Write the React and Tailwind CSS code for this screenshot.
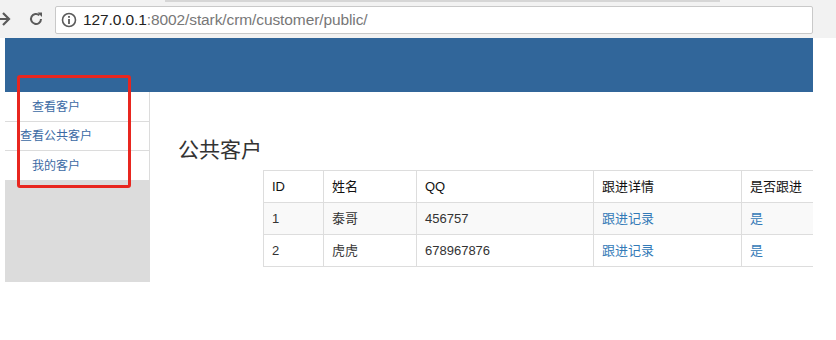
import React from 'react'

const rows = [
  { id: 1, name: '泰哥', qq: '456757' },
  { id: 2, name: '虎虎', qq: '678967876' },
]

const menu = ['查看客户', '查看公共客户', '我的客户']

function Toolbar() {
  return (
    <div className="relative h-[38px] bg-[#f2f2f2] flex items-center">
      <div className="absolute top-0 left-[165px] w-[555px] h-[2px] bg-[#d6d6d6]" />
      {/* forward arrow, cut at the left edge */}
      <svg className="absolute left-[-6px] top-[11px]" width="18" height="16" viewBox="0 0 18 16">
        <path d="M2 8h13M9 2l6 6-6 6" fill="none" stroke="#5a5a5a" strokeWidth="2.2" />
      </svg>
      {/* reload */}
      <svg className="absolute left-[28px] top-[11px]" width="16" height="16" viewBox="0 0 16 16">
        <path d="M13 8a5 5 0 1 1-1.6-3.7" fill="none" stroke="#5a5a5a" strokeWidth="2" />
        <path d="M9.5 1.5h4.5v4.5z" fill="#5a5a5a" />
      </svg>
      <div className="absolute left-[55px] top-[6px] w-[758px] h-[28px] bg-white border border-[#c9c9c9] rounded-[2px] flex items-center">
        <svg className="ml-[5px]" width="16" height="16" viewBox="0 0 16 16">
          <circle cx="8" cy="8" r="6.5" fill="none" stroke="#5a5a5a" strokeWidth="1.6" />
          <rect x="7.1" y="7" width="1.8" height="5" fill="#5a5a5a" />
          <rect x="7.1" y="4" width="1.8" height="1.8" fill="#5a5a5a" />
        </svg>
        <span className="ml-[6px] text-[15.5px] font-['Liberation_Sans',sans-serif] tracking-[-0.1px]">
          <span className="text-[#222]">127.0.0.1</span>
          <span className="text-[#777]">:8002/stark/crm/customer/public/</span>
        </span>
      </div>
    </div>
  )
}

function Sidebar() {
  return (
    <div className="w-[145px] shrink-0 flex flex-col">
      {menu.map((m, i) => (
        <div
          key={m}
          className={`bg-white border-r border-b border-[#dcdcdc] flex items-center ${i === 1 ? 'h-[29px]' : 'h-[30px]'}`}
        >
          <a className="w-[102px] text-center text-[12px] text-[#3b6aa4] whitespace-nowrap">{m}</a>
        </div>
      ))}
      <div className="h-[101px] bg-[#dcdcdc]" />
    </div>
  )
}

function CustomerTable() {
  const td = 'h-[32px] px-[8px] border border-[#dddddd] text-left align-middle'
  return (
    <table className="ml-[113px] mt-[8px] border-collapse text-[13px] text-[#333] table-fixed w-[640px]">
      <colgroup>
        <col className="w-[60px]" />
        <col className="w-[93px]" />
        <col className="w-[177px]" />
        <col className="w-[148px]" />
        <col className="w-[162px]" />
      </colgroup>
      <thead>
        <tr>
          <th className={`${td} font-normal text-[#111]`}>ID</th>
          <th className={`${td} font-normal text-[#111]`}>姓名</th>
          <th className={`${td} font-normal text-[#111]`}>QQ</th>
          <th className={`${td} font-normal text-[#111]`}>跟进详情</th>
          <th className={`${td} font-normal text-[#111]`}>是否跟进</th>
        </tr>
      </thead>
      <tbody>
        {rows.map((r, i) => (
          <tr key={r.id} className={i % 2 === 0 ? 'bg-[#f9f9f9]' : 'bg-white'}>
            <td className={td}>{r.id}</td>
            <td className={td}>{r.name}</td>
            <td className={td}>{r.qq}</td>
            <td className={`${td} text-[#337ab7]`}>跟进记录</td>
            <td className={`${td} text-[#337ab7]`}>是</td>
          </tr>
        ))}
      </tbody>
    </table>
  )
}

export default function App() {
  return (
    <div className="relative w-[836px] h-[340px] bg-white overflow-hidden font-['Liberation_Sans','Noto_Sans_CJK_SC',sans-serif]">
      <Toolbar />
      <div className="pl-[5px]">
        <div className="w-[808px] overflow-hidden">
          <div className="h-[54px] bg-[#31669a]" />
          <div className="flex">
            <Sidebar />
            <div className="flex-1 min-w-0">
              <h3 className="ml-[28px] mt-[46px] text-[21px] leading-[24px] text-[#333]">公共客户</h3>
              <CustomerTable />
            </div>
          </div>
        </div>
      </div>
      {/* red highlight box */}
      <div className="absolute left-[17px] top-[75px] w-[114px] h-[113px] border-[3px] border-[#e8261f] rounded-[3px]" />
    </div>
  )
}
